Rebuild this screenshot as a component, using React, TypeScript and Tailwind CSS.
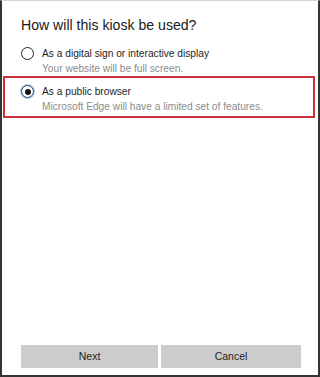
import React from "react";

const font = { fontFamily: '"Liberation Sans", Arial, sans-serif' };

function Radio({ checked }: { checked?: boolean }) {
	if (checked) {
		return (
			<span className="mt-px flex h-[13px] w-[13px] shrink-0 items-center justify-center rounded-full border-[1.5px] border-[#1d3f63] ring-1 ring-[#a9cbea]">
				<span className="h-[6px] w-[6px] rounded-full bg-[#111]" />
			</span>
		);
	}
	return (
		<span className="mt-px h-[13px] w-[13px] shrink-0 rounded-full border-[1.5px] border-[#222]" />
	);
}

function Option({
	title,
	note,
	checked,
}: {
	title: string;
	note: string;
	checked?: boolean;
}) {
	return (
		<div className="flex items-start gap-[8px]">
			<Radio checked={checked} />
			<div className="whitespace-nowrap text-[10.2px] leading-[15px]">
				<div className="text-[#1e1e1e]">{title}</div>
				<div className="text-[#8c8c8c]">{note}</div>
			</div>
		</div>
	);
}

export default function App() {
	return (
		<div
			className="flex h-[377px] w-[320px] flex-col border-x-2 border-b-2 border-t border-x-[#333] border-b-[#333] border-t-[#d4d4d4] bg-white"
			style={font}
		>
			<h1 className="ml-[19px] mt-[13px] text-[14.1px] leading-[22px] text-[#1a1a1a]">
				How will this kiosk be used?
			</h1>
			<div className="ml-[19px] mt-[10px]">
				<Option
					title="As a digital sign or interactive display"
					note="Your website will be full screen."
				/>
			</div>
			<div className="ml-px mr-[3px] border-2 border-[#c9323d] pb-[2px] pl-[16px] pt-[6px]">
				<Option
					checked
					title="As a public browser"
					note="Microsoft Edge will have a limited set of features."
				/>
			</div>
			<div className="flex-1" />
			<div className="mb-[7px] ml-[19px] flex gap-[3px]">
				<button className="h-[23px] w-[137px] bg-[#cccccc] text-[10.5px] text-[#1e1e1e]">
					Next
				</button>
				<button className="h-[23px] w-[140px] bg-[#cccccc] text-[10.5px] text-[#1e1e1e]">
					Cancel
				</button>
			</div>
		</div>
	);
}
